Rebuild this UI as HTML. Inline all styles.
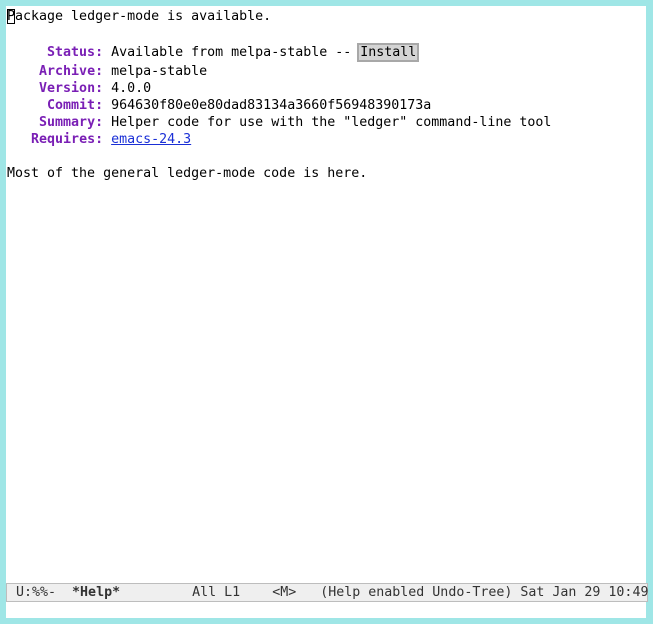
<!DOCTYPE html>
<html><head><style>
html,body{margin:0;padding:0;}
body{width:653px;height:624px;background:#9fe6e6;position:relative;overflow:hidden;font-family:"DejaVu Sans Mono","Liberation Mono",monospace;font-size:13.3px;color:#000;}
#win{position:absolute;left:6px;top:6px;width:640px;height:612px;background:#fff;}
.l{position:absolute;left:7px;white-space:pre;line-height:17px;height:17px;}
.k{color:#7a1fb5;font-weight:bold;}
a{color:#1a2fd6;text-decoration:underline;}
.btn{background:#d4d4d4;border:2px solid #a8a8a8;padding:0 1px;margin-left:-2px;}
.cur{outline:1px solid #000;outline-offset:-1px;}
#ml{position:absolute;left:6px;top:583px;width:639px;height:17px;background:#efefef;border:1px solid #bdbdbd;white-space:pre;line-height:17px;color:#333;font-family:"DejaVu Sans Mono",monospace;font-size:13.3px;padding-left:1px;box-sizing:content-box;}
</style></head><body>
<div id="win"></div>
<div class="l" style="top:8px"><span class="cur">P</span>ackage ledger-mode is available.</div>
<div class="l" style="top:44px">     <span class="k">Status:</span> Available from melpa-stable -- <span class="btn">Install</span></div>
<div class="l" style="top:63px">    <span class="k">Archive:</span> melpa-stable</div>
<div class="l" style="top:80px">    <span class="k">Version:</span> 4.0.0</div>
<div class="l" style="top:97px">     <span class="k">Commit:</span> 964630f80e0e80dad83134a3660f56948390173a</div>
<div class="l" style="top:114px">    <span class="k">Summary:</span> Helper code for use with the "ledger" command-line tool</div>
<div class="l" style="top:131px">   <span class="k">Requires:</span> <a>emacs-24.3</a></div>
<div class="l" style="top:165px">Most of the general ledger-mode code is here.</div>
<div id="ml"> U:%%-  <b>*Help*</b>         All L1    &lt;M&gt;   (Help enabled Undo-Tree) Sat Jan 29 10:49</div>
</body></html>
